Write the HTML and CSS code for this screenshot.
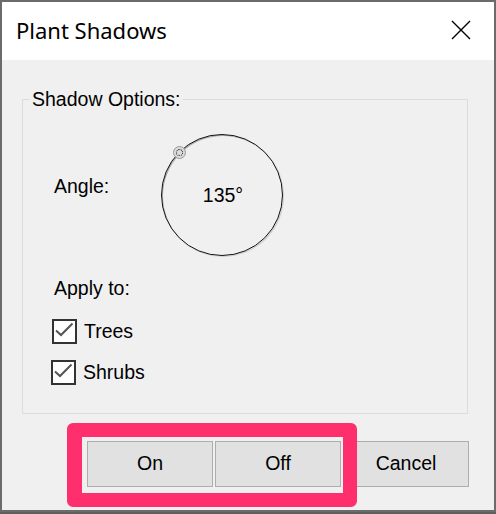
FILE: index.html
```html
<!DOCTYPE html>
<html lang="en">
  <head>
    <meta charset="UTF-8" />
    <meta name="viewport" content="width=device-width, initial-scale=1.0" />
    <title>Plant Shadows</title>
    <link rel="stylesheet" href="styles.css">
  </head>
  <body>
    <div class="dialog">
      <div class="titlebar">
        <span class="title">Plant Shadows</span>
        <button class="close" type="button" aria-label="Close">
          <svg width="20" height="20" viewBox="0 0 20 20">
            <path d="M1 1 L19 19 M19 1 L1 19" stroke="#000" stroke-width="1.4" fill="none" />
          </svg>
        </button>
      </div>

      <div class="content">
        <fieldset class="group">
          <legend>Shadow Options:</legend>

          <div class="angle-row">
            <span class="angle-label">Angle:</span>
            <div class="dial">
              <span class="knob"></span>
              <span class="dial-value">135°</span>
            </div>
          </div>

          <div class="apply-label">Apply to:</div>

          <label class="check">
            <span class="box">
              <svg width="21" height="21" viewBox="0 0 21 21">
                <path d="M2 9.5 L7 14 L18.5 2.5" stroke="#555" stroke-width="2" fill="none" />
              </svg>
            </span>
            Trees
          </label>
          <label class="check shrubs">
            <span class="box">
              <svg width="21" height="21" viewBox="0 0 21 21">
                <path d="M2 9.5 L7 14 L18.5 2.5" stroke="#555" stroke-width="2" fill="none" />
              </svg>
            </span>
            Shrubs
          </label>
        </fieldset>

        <div class="btn-row">
          <button type="button" class="btn">On</button>
          <button type="button" class="btn">Off</button>
          <button type="button" class="btn">Cancel</button>
          <div class="highlight"></div>
        </div>
      </div>
    </div>
  </body>
</html>
```

FILE: styles.css
```css
body {
  margin: 0;
  background-color: #5e5e5e;
  font-family: "Liberation Sans", Arial, sans-serif;
  font-size: 19.5px;
  color: #000;
}
.dialog {
  width: 496px;
  height: 512px;
  box-sizing: border-box;
  border: 2px solid #6b6b6b;
  background-color: #f0f0f0;
  display: flex;
  flex-direction: column;
}
.titlebar {
  height: 56px;
  background-color: #fff;
  display: flex;
  align-items: center;
  justify-content: space-between;
  padding: 0 23px 2px 14px;
}
.title {
  font-family: "Noto Sans", "Open Sans", sans-serif;
  font-size: 22px;
}
.close {
  border: none;
  background: none;
  padding: 0;
  width: 20px;
  height: 20px;
  display: flex;
}
.content {
  flex: 1;
  display: flex;
  flex-direction: column;
}
.group {
  margin: 28px 26px 0 20px;
  padding: 0 0 28px 31px;
  border: 1px solid #dcdcdc;
  min-width: 0;
}
.group legend {
  margin-left: -24px;
  padding: 0 2px;
  line-height: 22.4px;
}
.angle-row {
  display: flex;
  align-items: flex-start;
  margin-top: 24px;
}
.angle-label {
  width: 107px;
  margin-top: 41px;
}
.dial {
  position: relative;
  width: 122px;
  height: 122px;
  box-sizing: border-box;
  border: 1px solid #111;
  border-radius: 50%;
  box-shadow: inset 1px 1px 0 #a8a8a8, 1px 1px 0 #cfcfcf;
  display: flex;
  align-items: center;
  justify-content: center;
}
.dial-value {
  margin-left: 2px;
}
.knob {
  position: absolute;
  left: 11px;
  top: 11px;
  width: 13px;
  height: 13px;
  box-sizing: border-box;
  border-radius: 50%;
  background-color: #dadada;
  border: 1px solid #9a9a9a;
  display: flex;
  align-items: center;
  justify-content: center;
}
.knob::after {
  content: "";
  width: 5px;
  height: 5px;
  border-radius: 50%;
  border: 1px dotted #222;
}
.apply-label {
  margin-top: 21px;
  line-height: 22.4px;
}
.check {
  display: flex;
  align-items: center;
  gap: 7px;
  margin-top: 19px;
  margin-left: -2px;
}
.check.shrubs {
  margin-top: 16px;
  margin-left: -3px;
}
.box {
  width: 25px;
  height: 25px;
  box-sizing: border-box;
  border: 2px solid #333;
  background-color: #fff;
  display: flex;
  align-items: center;
  justify-content: center;
}
.btn-row {
  position: relative;
  display: flex;
  gap: 2px;
  margin: 27px 0 0 85px;
}
.btn {
  width: 126px;
  height: 46px;
  background-color: #e1e1e1;
  border: 1px solid #adadad;
  font-family: "Liberation Sans", Arial, sans-serif;
  font-size: 19.5px;
  color: #000;
  padding: 0;
}
.highlight {
  position: absolute;
  left: -20px;
  top: -18px;
  width: 290px;
  height: 84px;
  box-sizing: border-box;
  border-style: solid;
  border-color: #ff2e6c;
  border-width: 14px 14px 14px 15px;
  border-radius: 6px;
}
```
